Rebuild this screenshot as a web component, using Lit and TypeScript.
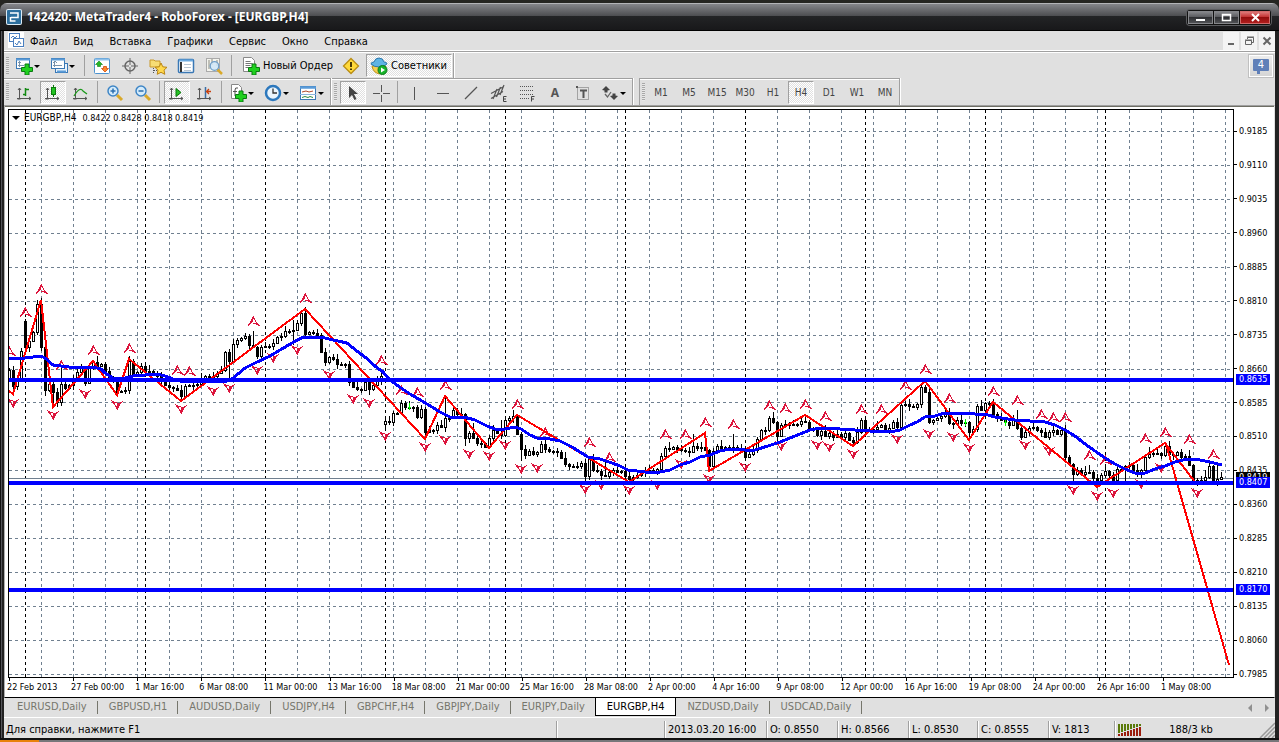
import { LitElement, html, svg, css, nothing } from "lit";
import { customElement, state } from "lit/decorators.js";
import { classMap } from "lit/directives/class-map.js";

/* ---------- price and time scales ---------- */

const PLOT = { left: 9, top: 110, width: 1224, height: 567 };
const TOP_PRICE = 0.9185;
const PRICE_STEP = 0.0075;
const yOf = (price: number) => 131 + ((TOP_PRICE - price) / 0.12) * 543;
const PRICES = Array.from({ length: 17 }, (_, i) => TOP_PRICE - PRICE_STEP * i);
const LEVELS = [0.8635, 0.8407, 0.817];
const LAST_PRICE = 0.8419;
const TIMES = [
  "22 Feb 2013", "27 Feb 00:00", "1 Mar 16:00", "6 Mar 08:00", "11 Mar 00:00", "13 Mar 16:00",
  "18 Mar 08:00", "21 Mar 00:00", "25 Mar 16:00", "28 Mar 08:00", "2 Apr 00:00", "4 Apr 16:00",
  "9 Apr 08:00", "12 Apr 00:00", "16 Apr 16:00", "19 Apr 08:00", "24 Apr 00:00", "26 Apr 16:00",
  "1 May 08:00",
];

/* ---------- series: closing level of every bar, 4 units apart ---------- */

const CLOSES = [
  370, 386, 380, 351, 347, 341, 332, 304, 347, 390, 384, 392, 402, 384, 388, 385, 378, 372, 368, 383,
  368, 362, 366, 364, 371, 378, 381, 392, 391, 390, 361, 374, 372, 366, 371, 371, 373, 376, 380, 385,
  387, 388, 390, 396, 386, 385, 385, 384, 379, 376, 378, 376, 373, 370, 352, 361, 344, 340, 338, 336,
  345, 347, 356, 347, 346, 346, 343, 337, 336, 331, 331, 330, 323, 313, 334, 332, 333, 335, 352, 362,
  357, 359, 364, 364, 364, 382, 387, 389, 390, 382, 389, 385, 380, 376, 421, 422, 413, 413, 403, 407,
  407, 407, 417, 409, 432, 430, 430, 425, 427, 418, 418, 410, 414, 414, 438, 433, 438, 443, 443, 447,
  438, 430, 433, 435, 420, 418, 416, 434, 449, 455, 451, 454, 452, 444, 449, 451, 451, 452, 458, 464,
  466, 467, 466, 463, 476, 457, 470, 471, 475, 476, 472, 470, 472, 471, 476, 479, 477, 475, 472, 470,
  470, 471, 469, 456, 448, 449, 447, 449, 450, 451, 452, 446, 448, 447, 450, 466, 451, 446, 448, 447,
  448, 447, 448, 450, 457, 454, 450, 439, 430, 430, 418, 422, 436, 425, 424, 425, 424, 424, 421, 422,
  428, 430, 435, 431, 436, 433, 437, 434, 437, 433, 440, 442, 432, 420, 430, 431, 429, 427, 425, 431,
  428, 422, 427, 405, 404, 406, 407, 404, 387, 392, 422, 420, 418, 416, 412, 423, 424, 420, 423, 422,
  432, 429, 406, 410, 403, 403, 414, 417, 420, 422, 425, 420, 428, 437, 432, 428, 427, 430, 432, 437,
  432, 430, 434, 430, 457, 464, 474, 470, 474, 472, 472, 478, 480, 475, 471, 475, 480, 469, 469, 466,
  465, 470, 474, 470, 457, 454, 453, 453, 455, 446, 454, 455, 452, 457, 456, 465, 480, 483, 480, 477,
  466, 481, 479, 477,
];
/* Bars that open with a gap. */
const GAPS: Record<number, number> = { 0: 378, 4: 321, 31: 361, 94: 424, 144: 463 };
/* Bars whose wick reaches far above or below the body. */
const HIGHS: Record<number, number> = {
  4: 319, 7: 300, 8: 298, 13: 368, 18: 364, 61: 331, 71: 320, 93: 370, 109: 396, 116: 423, 123: 420,
  149: 462, 171: 434, 181: 434, 252: 410, 270: 465, 285: 447, 299: 470, 302: 462,
};
const LOWS: Record<number, number> = {
  1: 396, 9: 396, 11: 405, 12: 407, 19: 386, 27: 396, 43: 400, 55: 378, 66: 350, 71: 345, 90: 395,
  94: 429, 104: 438, 109: 432, 114: 446, 128: 461, 144: 482, 175: 470, 211: 446, 240: 438, 266: 482,
  279: 483, 296: 484,
};
const WICK_UP = [2, 4, 1, 3, 5, 2, 1, 3, 2, 6, 1, 2, 4];
const WICK_DOWN = [3, 1, 4, 2, 2, 5, 1, 3, 4, 1, 2];

const FRACTALS_UP: [number, number][] = [
  [9, 351], [25, 312], [41, 289], [61, 365], [93, 350], [129, 348], [177, 370], [189, 371], [253, 321],
  [305, 298], [381, 360], [401, 390], [417, 392], [445, 385], [517, 404], [545, 432], [589, 442],
  [609, 457], [665, 434], [685, 434], [705, 422], [733, 424], [769, 405], [785, 408], [805, 404],
  [825, 416], [861, 409], [881, 409], [905, 385], [925, 369], [949, 398], [993, 391], [1017, 400],
  [1041, 414], [1053, 417], [1065, 417], [1089, 455], [1105, 460], [1145, 438], [1165, 432],
  [1189, 439], [1213, 454],
];
const FRACTALS_DOWN: [number, number][] = [
  [13, 403], [53, 415], [85, 394], [117, 405], [181, 409], [213, 391], [229, 388], [257, 370],
  [273, 358], [297, 350], [329, 375], [353, 399], [369, 403], [385, 436], [425, 447], [445, 440],
  [469, 454], [489, 456], [505, 445], [521, 469], [537, 468], [585, 489], [601, 485], [629, 490],
  [657, 485], [681, 464], [709, 479], [745, 467], [781, 446], [817, 445], [829, 447], [853, 454],
  [897, 439], [929, 434], [953, 437], [969, 448], [1025, 445], [1049, 451], [1073, 490], [1097, 496],
  [1113, 493], [1141, 484], [1161, 468], [1197, 493],
];

const ZIGZAG =
  "9,391 13,394 41,300 53,407 93,361 117,395 129,359 181,401 305,309 425,439 445,396 489,448 517,415 629,482 705,433 709,471 805,415 853,446 925,381 969,440 993,402 1097,487 1165,443 1195,482";
const AVERAGE =
  "9,358 16,359 25,358 41,356 45,358 53,365 69,367 93,367 101,369 105,373 113,378 125,378 133,376 145,375 157,374 165,376 173,379 180,381 205,381 224,382 232,379 245,368 255,363 270,356 280,350 292,343 303,337 325,338 333,340 347,343 358,352 365,357 375,366 383,372 388,378 398,386 410,394 422,401 432,407 440,412 450,417 464,417 475,420 487,426 495,429 505,429 515,427 521,429 530,435 537,438 550,439 560,441 572,447 580,452 588,457 600,459 612,463 620,466 628,470 637,471 645,472 660,472 670,470 680,465 690,462 700,457 710,455 720,451 730,449 745,450 755,450 768,446 780,442 790,438 800,434 810,430 820,428 840,429 855,430 870,431 890,432 900,430 910,425 917,422 925,417 935,416 945,413 960,413 975,414 988,415 995,417 1015,420 1030,421 1045,422 1055,425 1065,430 1075,436 1085,444 1095,451 1105,458 1115,464 1125,469 1135,473 1145,473 1155,469 1165,466 1175,462 1187,459 1200,460 1210,462 1222,465";

function candlePaths() {
  let solid = "";
  let hollow = "";
  CLOSES.forEach((close, i) => {
    const x = PLOT.left + i * 4;
    const open = GAPS[i] ?? CLOSES[i - 1];
    const top = Math.min(open, close);
    const bottom = Math.max(open, close, top + 1);
    const high = Math.min(HIGHS[i] ?? top - WICK_UP[i % 13], top);
    const low = Math.max(LOWS[i] ?? bottom + WICK_DOWN[i % 11], bottom);
    solid += `M${x} ${high}h1V${low}h-1zM${x - 1} ${top}h3V${bottom + 1}h-3z`;
    if (close < open && bottom - top > 1) hollow += `M${x} ${top + 1}h1V${bottom}h-1z`;
  });
  return { solid, hollow };
}
const CANDLES = candlePaths();

@customElement("price-chart")
export class PriceChart extends LitElement {
  static styles = css`
    :host {
      display: grid;
      grid-template-columns: minmax(0, 1fr) 40px;
      grid-template-rows: minmax(0, 1fr) 18px;
      background: #fff;
      color: #000;
      font: 9px/12px "DejaVu Sans Condensed", "DejaVu Sans", sans-serif;
    }
    .plot {
      position: relative;
      border: 1px solid #000;
      overflow: hidden;
    }
    .plot svg {
      display: block;
      width: 100%;
      height: 100%;
      shape-rendering: crispEdges;
    }
    .legend {
      position: absolute;
      left: 3px;
      top: 2px;
      display: flex;
      align-items: center;
      gap: 4px;
    }
    .legend i {
      border: 4px solid transparent;
      border-top-color: #000;
      border-bottom: 0;
    }
    .legend b {
      font-size: 10px;
      font-weight: normal;
      margin-right: 2px;
    }
    .prices {
      grid-row: 1 / 3;
      grid-column: 2;
      position: relative;
      display: flex;
      flex-direction: column;
      justify-content: space-between;
      padding: 16px 0;
    }
    .prices span {
      display: flex;
      align-items: center;
      gap: 2px;
    }
    .prices span::before {
      content: "";
      width: 3px;
      height: 1px;
      background: #000;
    }
    .tag {
      position: absolute;
      left: 2px;
      width: 31px;
      padding-left: 3px;
      height: 11px;
      line-height: 11px;
      margin-top: -6px;
      color: #fff;
      background: #00f;
    }
    .tag.last {
      background: #000;
    }
    .times {
      display: grid;
      grid-template-columns: repeat(19, minmax(0, 64fr)) 8fr;
      margin-left: -2px;
      padding: 0 1px;
    }
    .times span {
      white-space: nowrap;
    }
    .times span::before {
      content: "";
      display: block;
      width: 1px;
      height: 3px;
      margin-left: 2px;
      background: #000;
    }
  `;

  render() {
    const right = PLOT.left + PLOT.width;
    const bottom = PLOT.top + PLOT.height;
    const tagTop = (price: number) => `top:${((yOf(price) - 109) / 587) * 100}%`;
    const columns = Array.from({ length: 38 }, (_, i) => 41 + 32 * i);
    const weeks = Array.from({ length: 10 }, (_, i) => 25 + 120 * i);
    return html`
      <div class="plot">
        <svg viewBox="${PLOT.left} ${PLOT.top} ${PLOT.width} ${PLOT.height}" preserveAspectRatio="none" role="img" aria-label="EURGBP,H4">
          <defs>
            <g id="up">
              <path d="M0-5h1v2L-1 2-3 3-5 5-6 4-3 1z" fill="#dc143c" />
              <path d="M.5-4.500L2.500.5L6.500 4.500L2.500 2.500L-.5 2.500" fill="none" stroke="#dc143c" />
            </g>
            <g id="down">
              <path d="M0 5h1v-1L3 0 6-4 4-3 1-1H0z" fill="#dc143c" />
              <path d="M.5 4.500L-1.500.5L-5.500-4.500L-2.500-2.500L2.500-1.500" fill="none" stroke="#dc143c" />
            </g>
          </defs>
          <g stroke="#708090" stroke-dasharray="3 3">
            ${columns.map((x) => svg`<path d="M${x + 0.5} ${PLOT.top}V${bottom}" />`)}
            ${PRICES.map((p) => svg`<path d="M${PLOT.left} ${Math.round(yOf(p)) + 0.5}H${right}" />`)}
          </g>
          <g stroke="#000" stroke-dasharray="3 3">
            ${weeks.map((x) => svg`<path d="M${x + 0.5} ${PLOT.top}V${bottom}" />`)}
          </g>
          <path d="M${PLOT.left} 478.500H${right}" stroke="#708090" />
          <path d=${CANDLES.solid} fill="#000" />
          <path d=${CANDLES.hollow} fill="#fff" />
          ${[409, 965, 1005].map((x) => svg`<path d="M${x - 1} ${x === 409 ? 407 : 422}h3M${x + 0.5} ${x === 409 ? 403 : 419}v7" stroke="#0f0" />`)}
          ${FRACTALS_UP.map(([x, y]) => svg`<use href="#up" x=${x} y=${y} />`)}
          ${FRACTALS_DOWN.map(([x, y]) => svg`<use href="#down" x=${x} y=${y} />`)}
          <polyline points=${ZIGZAG} fill="none" stroke="#f00" stroke-width="2" />
          <path d="M1166 444L1229 665" stroke="#f00" stroke-width="2" />
          <polyline points=${AVERAGE} fill="none" stroke="#00f" stroke-width="3" />
          ${LEVELS.map((p) => svg`<path d="M${PLOT.left} ${Math.round(yOf(p))}H${right}" stroke="#00f" stroke-width="4" />`)}
        </svg>
        <div class="legend"><i></i><b>EURGBP,H4</b><span>0.8422 0.8428 0.8418 0.8419</span></div>
      </div>
      <div class="prices">
        ${PRICES.map((p) => html`<span>${p.toFixed(4)}</span>`)}
        <div class="tag last" style=${tagTop(LAST_PRICE)}>${LAST_PRICE.toFixed(4)}</div>
        ${LEVELS.map((p) => html`<div class="tag" style=${tagTop(p)}>${p.toFixed(4)}</div>`)}
      </div>
      <div class="times">${TIMES.map((t) => html`<span>${t}</span>`)}</div>
    `;
  }
}

/* ---------- toolbar glyphs, drawn in an 18 × 18 box ---------- */

const plus = svg`<path d="M10 7h4v3.500h3.500v4H14V18h-4v-3.500H6.500v-4H10z" fill="#1fd01f" stroke="#0a7a12" />`;
const axes = svg`<path d="M3.500 4v11M1 14.500h14M2 6l1.500-2L5 6M1.500 15h3M13 13l2 1.500-2 1.500" stroke="#555" fill="none" />`;
const lens = svg`<path d="M11 11l5 5" stroke="#d9a92a" stroke-width="3" /><circle cx="7" cy="7" r="5" fill="#d4ebfb" stroke="#3f86c6" stroke-width="1.500" />`;

const ICONS: Record<string, unknown> = {
  newChart: svg`<rect x="1.500" y="1.500" width="13" height="10" fill="#fff" stroke="#3a78b5" /><path d="M1 2.500h14" stroke="#5a9bd8" stroke-width="2" /><path d="M4.500 4v6M3 8.500h6M3 5.500h3" stroke="#7a93ab" />${plus}`,
  profiles: svg`<rect x="5.500" y="6.500" width="12" height="9" fill="#e8f2fb" stroke="#3a78b5" /><rect x="1.500" y="1.500" width="13" height="10" fill="#fff" stroke="#3a78b5" /><path d="M1 2.500h14M7 14.500h9" stroke="#5a9bd8" stroke-width="2" /><path d="M4.500 4v6M3 8.500h9M3 6l2-2 2 2" stroke="#7a93ab" fill="none" />`,
  market: svg`<rect x="1.500" y="1.500" width="15" height="15" rx="1" fill="#fff" stroke="#4c92cf" /><path d="M2 2.500h14" stroke="#8fc1ea" stroke-width="2" /><path d="M6 4l3.500 3.500h-2v2h-3v-2h-2z" fill="#25b625" stroke="#0c7c14" stroke-width=".6" /><path d="M12 15l-3.500-3.500h2v-2h3v2h2z" fill="#ff8a2b" stroke="#d14a0c" stroke-width=".8" />`,
  crosshair: svg`<circle cx="9" cy="9" r="5" fill="none" stroke="#666" stroke-width="1.500" /><path d="M9 1v7M9 10v7M1 9h7M10 9h7" stroke="#666" />`,
  star: svg`<path d="M1 3h4l1 1h5v6H1z" fill="#f7dd74" stroke="#c9992a" /><path d="M4.500 11v6M5 13.500h3" stroke="#555" stroke-dasharray="1 1" /><path d="M12 6l1.800 3.800 4.200.5-3 2.800.8 4.200-3.800-2-3.800 2 .8-4.200-3-2.800 4.200-.5z" fill="#ffd84d" stroke="#b98512" />`,
  terminal: svg`<rect x="1.500" y="2.500" width="15" height="13" rx="1" fill="#fff" stroke="#3a78b5" stroke-width="1.500" /><path d="M2 3.500h14" stroke="#6aa9df" stroke-width="2" /><path d="M4 5v10" stroke="#333" stroke-width="2" /><path d="M7 7.500h7M7 10.500h7M7 13.500h7" stroke="#b8c6d3" />`,
  tester: svg`<rect x="1.500" y="1.500" width="13" height="13" fill="#f4f4ee" stroke="#aaa" /><path d="M4 3v9M7 2v6M12 3v6" stroke="#8a8a80" /><path d="M12 12l5 5" stroke="#d9a92a" stroke-width="2.500" /><circle cx="9.500" cy="9" r="4.300" fill="#cfe6f8" fill-opacity=".85" stroke="#6f9fc9" stroke-width="1.300" />`,
  order: svg`<path d="M1.500.5h8l3 3v11h-11z" fill="#fff" stroke="#888" /><path d="M3.500 4.500h5M3.500 6.500h7M3.500 8.500h5M3.500 10.500h3" stroke="#777" />${plus}`,
  warning: svg`<path d="M9 1.500L16.500 9 9 16.500 1.500 9z" fill="#ffd93b" stroke="#b98d14" stroke-width="1.300" /><path d="M9 5v5M9 11.500v1.500" stroke="#4a3a06" stroke-width="2" />`,
  advisor: svg`<path d="M2 9q1 7 8 8 4-1 6-8z" fill="#f5cf51" stroke="#b98d14" /><path d="M1 7q0-2 3-2 1-4 5-4t5 4q3 0 3 2-3 3-8 3T1 7z" fill="#5fb4e4" stroke="#2b78ad" /><circle cx="12.500" cy="13" r="4.500" fill="#17b32a" stroke="#0a7a18" /><path d="M11 10.500l4 2.500-4 2.500z" fill="#fff" />`,
  bars: svg`${axes}<path d="M9.500 4v8M7 10.500h3M9 5.500h4" stroke="#138a13" stroke-width="1.500" />`,
  candles: svg`${axes}<path d="M9.500 1v12" stroke="#0b7a0b" /><rect x="7.500" y="3.500" width="4" height="7" fill="#22c322" stroke="#0b7a0b" />`,
  line: svg`${axes}<path d="M2 12q6-10 9-5l4 3" stroke="#1c9a1c" fill="none" stroke-width="1.300" />`,
  zoomIn: svg`${lens}<path d="M4.500 7h5M7 4.500v5" stroke="#2a6fb0" stroke-width="1.500" />`,
  zoomOut: svg`${lens}<path d="M4.500 7h5" stroke="#2a6fb0" stroke-width="1.500" />`,
  scroll: svg`${axes}<path d="M8 4.500l5 4-5 4z" fill="#25c025" stroke="#0b7a0b" />`,
  shift: svg`${axes}<path d="M9.500 3v11" stroke="#3a6ea5" stroke-width="1.500" /><path d="M15 7.500h-4M13 5l-2.500 2.500L13 10" stroke="#c8410f" fill="none" stroke-width="1.300" />`,
  indicator: svg`<path d="M2.500.5h7l3 3v11h-10z" fill="#fff" stroke="#888" /><path d="M9 4q-3-1-3 2v6M4 7.500h4" stroke="#555" fill="none" />${plus}`,
  clock: svg`<circle cx="9" cy="9" r="7" fill="#eaf5fd" stroke="#2c78bd" stroke-width="2.500" /><path d="M9 4.500V9h4" stroke="#333" fill="none" stroke-width="1.300" />`,
  template: svg`<rect x="1.500" y="2.500" width="15" height="13" fill="#fff" stroke="#3a78b5" /><path d="M1 3.500h16" stroke="#5a9bd8" stroke-width="2.500" /><path d="M1 10.500h16" stroke="#8ab5dc" /><path d="M3 8l4-1 3 1 4-1" stroke="#b04a2a" fill="none" /><path d="M3 13.500l3-1 3 1 2-1 3 1" stroke="#2b8a3a" fill="none" />`,
  cursor: svg`<path d="M5 2v12l3-3 2.500 5 2-1L10 10h4z" fill="#444" />`,
  cross: svg`<path d="M9.500 1v7M9.500 11v7M1 9.500h7M11 9.500h7" stroke="#555" />`,
  vline: svg`<path d="M8.500 3v13" stroke="#555" />`,
  hline: svg`<path d="M3 9.500h12" stroke="#555" />`,
  trend: svg`<path d="M3 15L15 3" stroke="#555" stroke-width="1.200" />`,
  channel: svg`<path d="M1 9.500L13 3M1 14.500l12-7M3 15l4-10M6.500 13l4-10M10 11l4-10" stroke="#555" fill="none" stroke-width="1.200" /><path d="M16.500 12.500h-3v5h3M13.500 15h2.500" stroke="#444" fill="none" />`,
  fibo: svg`<path d="M2 2.500h14M2 6.500h14M2 10.500h14M2 14.500h9" stroke="#555" stroke-dasharray="1 1" /><path d="M16.500 12.500h-3v5M13.500 15h2.500" stroke="#444" fill="none" />`,
  label: svg`<rect x="3.500" y="3.500" width="11" height="12" fill="none" stroke="#666" stroke-dasharray="1 1" /><path d="M2 2h2v2H2z" fill="#555" /><path d="M6 6.500h7M9.500 6v8" stroke="#555" stroke-width="2" />`,
  arrows: svg`<path d="M5 2l4 4-2.500.5v2h-3v-2L1 6zM13 16l-4-4 2.500-.5v-2h3v2l2.500.5z" fill="#444" /><path d="M4 10l2.500 3L10 8" stroke="#666" fill="none" stroke-width="1.300" />`,
  chartDoc: svg`<rect x="1.500" y="1.500" width="10" height="8" fill="#fff" stroke="#4a7fc0" /><rect x="5.500" y="6.500" width="10" height="8" fill="#fff" stroke="#4a7fc0" /><path d="M3 6l2-2 2 2 2-2M7 11l2 2 2-4 2 3" stroke="#4a7fc0" fill="none" />`,
};

const icon = (name: string) => html`<svg class="icon" viewBox="0 0 18 18" aria-hidden="true">${ICONS[name]}</svg>`;

interface Tool {
  icon?: string;
  name?: string;
  text?: string;
  glyph?: string;
  menu?: boolean;
  pressed?: boolean;
}
const SEP = "|";
type Entry = Tool | typeof SEP;

const STANDARD: Entry[] = [
  { icon: "newChart", name: "Новый график", menu: true },
  { icon: "profiles", name: "Профили", menu: true },
  SEP,
  { icon: "market", name: "Обзор рынка" },
  { icon: "crosshair", name: "Окно данных" },
  { icon: "star", name: "Навигатор" },
  { icon: "terminal", name: "Терминал" },
  { icon: "tester", name: "Тестер стратегий" },
  SEP,
  { icon: "order", text: "Новый Ордер" },
  { icon: "warning", name: "MetaEditor" },
  { icon: "advisor", text: "Советники", pressed: true },
];
const CHARTS: Entry[] = [
  { icon: "bars", name: "Бары" },
  { icon: "candles", name: "Японские свечи", pressed: true },
  { icon: "line", name: "Линия" },
  SEP,
  { icon: "zoomIn", name: "Увеличить" },
  { icon: "zoomOut", name: "Уменьшить" },
  SEP,
  { icon: "scroll", name: "Автопрокрутка", pressed: true },
  { icon: "shift", name: "Сдвиг графика" },
  SEP,
  { icon: "indicator", name: "Индикаторы", menu: true },
  { icon: "clock", name: "Периоды", menu: true },
  { icon: "template", name: "Шаблоны", menu: true },
];
const DRAWING: Entry[] = [
  { icon: "cursor", name: "Курсор", pressed: true },
  { icon: "cross", name: "Перекрестие" },
  SEP,
  { icon: "vline", name: "Вертикальная линия" },
  { icon: "hline", name: "Горизонтальная линия" },
  { icon: "trend", name: "Трендовая линия" },
  { icon: "channel", name: "Канал" },
  { icon: "fibo", name: "Линии Фибоначчи" },
  { glyph: "A", name: "Текст" },
  { icon: "label", name: "Текстовая метка" },
  { icon: "arrows", name: "Стрелки", menu: true },
];
const PERIODS = ["M1", "M5", "M15", "M30", "H1", "H4", "D1", "W1", "MN"];
const MENU = ["Файл", "Вид", "Вставка", "Графики", "Сервис", "Окно", "Справка"];
const TABS = [
  "EURUSD,Daily", "GBPUSD,H1", "AUDUSD,Daily", "USDJPY,H4", "GBPCHF,H4", "GBPJPY,Daily",
  "EURJPY,Daily", "EURGBP,H4", "NZDUSD,Daily", "USDCAD,Daily",
];
const QUOTE = ["2013.03.20 16:00", "O: 0.8550", "H: 0.8566", "L: 0.8530", "C: 0.8555", "V: 1813"];

@customElement("app-root")
export class AppRoot extends LitElement {
  @state() private tab = "EURGBP,H4";
  @state() private period = "H4";

  static styles = css`
    :host {
      display: flex;
      flex-direction: column;
      height: 100vh;
      box-sizing: border-box;
      background: #262622;
      color: #000;
      font: 11px/14px "DejaVu Sans Condensed", "DejaVu Sans", sans-serif;
      overflow: hidden;
    }
    button {
      font: inherit;
      color: inherit;
      background: none;
      border: 0;
      padding: 0;
      margin: 0;
      display: flex;
      align-items: center;
      justify-content: center;
      white-space: nowrap;
    }
    .window {
      flex: 1;
      min-height: 0;
      margin-top: 3px;
      display: flex;
      flex-direction: column;
      border-radius: 7px 7px 0 0;
      overflow: hidden;
      background: linear-gradient(90deg, #111 0 1px, #55555a 1px 2px, #222 2px);
    }
    .title {
      height: 28px;
      flex: none;
      display: flex;
      align-items: center;
      gap: 5px;
      padding: 0 8px 0 6px;
      background: linear-gradient(#b4b5b8 0 1px, #85868a 1px, #4c4d50 13px, #232426 13px, #18181a 27px, #000 27px);
      color: #fff;
    }
    .title h1 {
      flex: 1;
      margin: 0;
      font: bold 12px/16px "Noto Sans", "Open Sans", sans-serif;
    }
    .logo {
      width: 16px;
      height: 16px;
    }
    .controls {
      display: flex;
      padding: 1px;
      gap: 1px;
      border-radius: 3px;
      background: #111;
      box-shadow: 0 0 0 1px #5b5c5f;
    }
    .controls button {
      width: 25px;
      height: 13px;
      background: linear-gradient(#8d8e92, #55565a 50%, #2f3033 50%, #55565a);
      box-shadow: inset 0 0 0 1px #85868a;
    }
    .controls .close {
      width: 30px;
      background: linear-gradient(#e38686, #c02a2a 50%, #930d0d 50%, #b52020);
      box-shadow: inset 0 0 0 1px #d06a6a;
    }
    .controls svg {
      width: 11px;
      height: 9px;
    }
    .client {
      flex: 1;
      min-height: 0;
      margin: 0 4px;
      display: flex;
      flex-direction: column;
      background: #e0e0e0;
    }
    .menubar {
      height: 19px;
      flex: none;
      display: flex;
      border-bottom: 1px solid #fff;
      box-shadow: 0 1px #a0a0a0, 0 2px #fff;
      margin-bottom: 2px;
    }
    .menubar .doc {
      width: 16px;
      height: 16px;
      margin: 1px 0 0 4px;
    }
    .menubar nav {
      flex: 1;
      display: flex;
      margin-left: -2px;
      padding-top: 2px;
    }
    .menubar nav button {
      padding: 0 8px;
    }
    .mdi {
      display: flex;
      gap: 2px;
      padding-top: 1px;
    }
    .mdi button {
      width: 16px;
      height: 18px;
      background: #f4f4f4;
    }
    .mdi svg {
      width: 12px;
      height: 12px;
    }
    .bar-row {
      flex: none;
      display: flex;
      height: 25px;
    }
    .bar-row.second {
      height: 27px;
      gap: 5px;
    }
    .bars {
      display: flex;
    }
    .bar {
      display: flex;
      align-items: stretch;
      box-sizing: border-box;
      padding-left: 2px;
      border-right: 1px solid #a0a0a0;
      box-shadow: 1px 0 #fff;
      margin-right: 1px;
    }
    .second .bar {
      border-top: 1px solid #a0a0a0;
      box-shadow: 1px 0 #fff, inset 0 1px #fff;
    }
    .second > .bar {
      border-left: 1px solid #a0a0a0;
    }
    .grip {
      width: 3px;
      margin: 4px 2px 4px 0;
      background: repeating-linear-gradient(#a8a8a8 0 1px, #e8e8e8 1px 2px);
    }
    .bar button {
      width: 28px;
      box-sizing: border-box;
      border: 1px solid transparent;
      margin: 1px 0 0;
      color: #444;
    }
    .second .bar button {
      margin-top: 2px;
    }
    .bar button.menu {
      width: 35px;
      justify-content: flex-start;
      padding-left: 3px;
      gap: 1px;
    }
    .bar button.wide {
      width: auto;
      padding: 0 3px 0 6px;
      gap: 3px;
      color: #000;
    }
    .bar button.pressed,
    .second .bar button.pressed {
      border-color: #a0a0a0 #fff #fff #a0a0a0;
      background: repeating-conic-gradient(#fff 0 25%, #e0e0e0 0 50%) 0 0 / 2px 2px;
      margin: 2px 1px 1px;
      width: 26px;
    }
    .bar button.wide.pressed {
      width: auto;
      padding: 0 4px 0 3px;
      margin-top: 1px;
    }
    .bar button.period {
      font-size: 10px;
    }
    .glyph {
      font: bold 12px/14px "Noto Sans", sans-serif;
      color: #555;
    }
    .menu::after {
      content: "";
      border: 3px solid transparent;
      border-top-color: #000;
      border-bottom: 0;
    }
    .icon {
      width: 18px;
      height: 18px;
      flex: none;
    }
    .sep {
      width: 1px;
      margin: 2px 3px 2px 2px;
      background: #a0a0a0;
    }
    .bar-row:not(.second) .sep {
      margin-left: 3px;
    }
    .news {
      margin: 1px 1px 0 auto;
      width: 26px;
      height: 24px;
      box-sizing: border-box;
      border: 1px solid #c0c0c0;
      box-shadow: inset 0 0 0 1px #fff;
      background: linear-gradient(#eee, #d4d4d4);
    }
    .news span {
      position: relative;
      width: 16px;
      height: 12px;
      border-radius: 1px;
      margin-bottom: 3px;
      background: #5f7fb8;
      color: #fff;
      font-size: 11px;
      line-height: 12px;
    }
    .news span::after {
      content: "";
      position: absolute;
      left: 4px;
      top: 12px;
      border: 3px solid transparent;
      border-top-color: #5f7fb8;
      border-right-color: #5f7fb8;
      border-bottom: 0;
      border-left-width: 0;
    }
    .workspace {
      flex: 1;
      min-height: 0;
      display: flex;
      flex-direction: column;
      border-top: 1px solid #a0a0a0;
      border-left: 1px solid #b0b0b0;
      border-bottom: 1px solid #000;
      border-right: 1px solid #e0e0e0;
      box-shadow: inset 0 1px #6e6e64;
      background: #fff;
      padding: 3px 0 1px 3px;
    }
    price-chart {
      flex: 1;
      min-height: 0;
    }
    .tabs {
      flex: none;
      height: 19px;
      display: flex;
      color: #76766c;
      border-bottom: 1px solid #fff;
      padding-left: 2px;
    }
    .tabs button {
      height: 17px;
      box-sizing: border-box;
      padding: 1px 11px 0 11px;
      position: relative;
    }
    .tabs button::after {
      content: "";
      position: absolute;
      right: 0;
      top: 3px;
      bottom: 1px;
      width: 1px;
      background: #76766c;
    }
    .tabs button.active {
      height: 18px;
      margin-left: -1px;
      padding: 0 11px;
      color: #000;
      background: #fff;
      border: solid #000;
      border-width: 0 1px 1px;
    }
    .tabs button.active::after {
      display: none;
    }
    .tabs .arrows {
      margin-left: auto;
      display: flex;
      align-items: center;
      gap: 13px;
      padding-right: 6px;
    }
    .tabs .arrows button {
      height: 8px;
      padding: 0;
    }
    .tabs .arrows button::after {
      position: static;
      width: 0;
      background: none;
      border: 4px solid transparent;
      border-right-color: #909090;
      border-left: 0;
    }
    .tabs .arrows button.next::after {
      border-right: 0;
      border-left: 4px solid #909090;
    }
    .status {
      flex: none;
      height: 19px;
      display: grid;
      grid-template-columns: minmax(0, 1fr) 108px 102px 71px 71px 69px 71px 66px 161px;
      align-items: stretch;
      padding-bottom: 1px;
    }
    .status > div {
      border-left: 1px solid #a0a0a0;
      box-shadow: inset 1px 0 #fff;
      margin-top: 3px;
      line-height: 18px;
      padding-left: 3px;
      white-space: nowrap;
    }
    .status > div:first-child {
      border-left: 0;
      box-shadow: none;
      padding-left: 2px;
    }
    .status .net {
      display: flex;
      align-items: center;
    }
    .meter {
      width: 23px;
      height: 12px;
    }
    .net span {
      flex: 1;
      text-align: center;
      padding-right: 18px;
    }
    .size {
      width: 16px;
      height: 16px;
    }
    .edge {
      flex: none;
      height: 4px;
      background: linear-gradient(#111 0 2px, #77777a 2px);
      display: flex;
      align-items: flex-end;
    }
    .edge::before {
      content: "";
      width: 39px;
      height: 2px;
      background: #e8820c;
    }
  `;

  private entry(e: Entry) {
    if (e === SEP) return html`<span class="sep"></span>`;
    return html`<button
      class=${classMap({ menu: !!e.menu, wide: !!e.text, pressed: !!e.pressed })}
      aria-label=${e.name ?? e.text ?? nothing}
    >${e.icon ? icon(e.icon) : nothing}${e.glyph ? html`<span class="glyph">${e.glyph}</span>` : nothing}${e.text ?? nothing}</button>`;
  }

  private bar(entries: Entry[]) {
    return html`<div class="bar" role="toolbar"><span class="grip"></span>${entries.map((e) => this.entry(e))}</div>`;
  }

  render() {
    return html`
      <div class="window">
        <header class="title">
          <svg class="logo" viewBox="0 0 16 16" aria-hidden="true">
            <rect width="16" height="16" rx="2" fill="#dcebf5" />
            <rect x="1" y="1" width="14" height="14" rx="1" fill="#2d6f9e" />
            <path d="M4 4h8v4.500H5M4.500 8V12h5" fill="none" stroke="#fff" stroke-width="1.500" />
          </svg>
          <h1>142420: MetaTrader4 - RoboForex - [EURGBP,H4]</h1>
          <div class="controls">
            <button aria-label="Свернуть"><svg viewBox="0 0 11 9"><path d="M1 7h9" stroke="#fff" stroke-width="2" /></svg></button>
            <button aria-label="Развернуть"><svg viewBox="0 0 11 9"><path d="M1.500 1.500h8v6h-8zM1 2h9" fill="none" stroke="#fff" stroke-width="1.500" /></svg></button>
            <button class="close" aria-label="Закрыть"><svg viewBox="0 0 11 9"><path d="M2 1l7 7M9 1L2 8" stroke="#fff" stroke-width="2" /></svg></button>
          </div>
        </header>
        <div class="client">
          <div class="menubar">
            <svg class="doc" viewBox="0 0 16 16" aria-hidden="true"><rect width="16" height="16" fill="#fff" />${ICONS.chartDoc}</svg>
            <nav>${MENU.map((m) => html`<button>${m}</button>`)}</nav>
            <div class="mdi">
              <button aria-label="Свернуть окно"><svg viewBox="0 0 12 12"><path d="M3 9h6" stroke="#666" stroke-width="2" /></svg></button>
              <button aria-label="Восстановить окно"><svg viewBox="0 0 12 12"><path d="M4.500 4V2.500h6v5H9M4 2h7M2.500 5.500h6v4h-6zM2 5h7" fill="none" stroke="#666" /></svg></button>
              <button aria-label="Закрыть окно"><svg viewBox="0 0 12 12"><path d="M2.500 2.500l7 7M9.500 2.500l-7 7" stroke="#666" stroke-width="2" /></svg></button>
            </div>
          </div>
          <div class="bar-row">
            ${this.bar(STANDARD)}
            <button class="news" aria-label="Сообщения"><span>4</span></button>
          </div>
          <div class="bar-row second">
            <div class="bars">${this.bar(CHARTS)}${this.bar(DRAWING)}</div>
            <div class="bar" role="toolbar">
              <span class="grip"></span>
              ${PERIODS.map(
                (p) => html`<button class=${classMap({ period: true, pressed: p === this.period })} @click=${() => (this.period = p)}>${p}</button>`,
              )}
            </div>
          </div>
          <main class="workspace"><price-chart></price-chart></main>
          <div class="tabs">
            ${TABS.map(
              (t) => html`<button class=${classMap({ active: t === this.tab })} @click=${() => (this.tab = t)}>${t}</button>`,
            )}
            <div class="arrows"><button aria-label="Назад"></button><button class="next" aria-label="Вперёд"></button></div>
          </div>
          <footer class="status">
            <div>Для справки, нажмите F1</div>
            <div></div>
            ${QUOTE.map((q) => html`<div>${q}</div>`)}
            <div class="net">
              <svg class="meter" viewBox="0 0 23 12" aria-hidden="true">
                ${Array.from({ length: 8 }, (_, i) => svg`<path d="M${i * 3} 0h2v${9 - i}h-2z" fill="#5a7a0a" /><path d="M${i * 3} ${10 - i}h2V12h-2z" fill="#9c1c0c" />`)}
              </svg>
              <span>188/3 kb</span>
              <svg class="size" viewBox="0 0 16 16" aria-hidden="true"><path d="M1 16L16 1M5 16L16 5M9 16l7-7M13 16l3-3" stroke="#999" stroke-width="1.500" /></svg>
            </div>
          </footer>
        </div>
        <div class="edge"></div>
      </div>
    `;
  }
}
